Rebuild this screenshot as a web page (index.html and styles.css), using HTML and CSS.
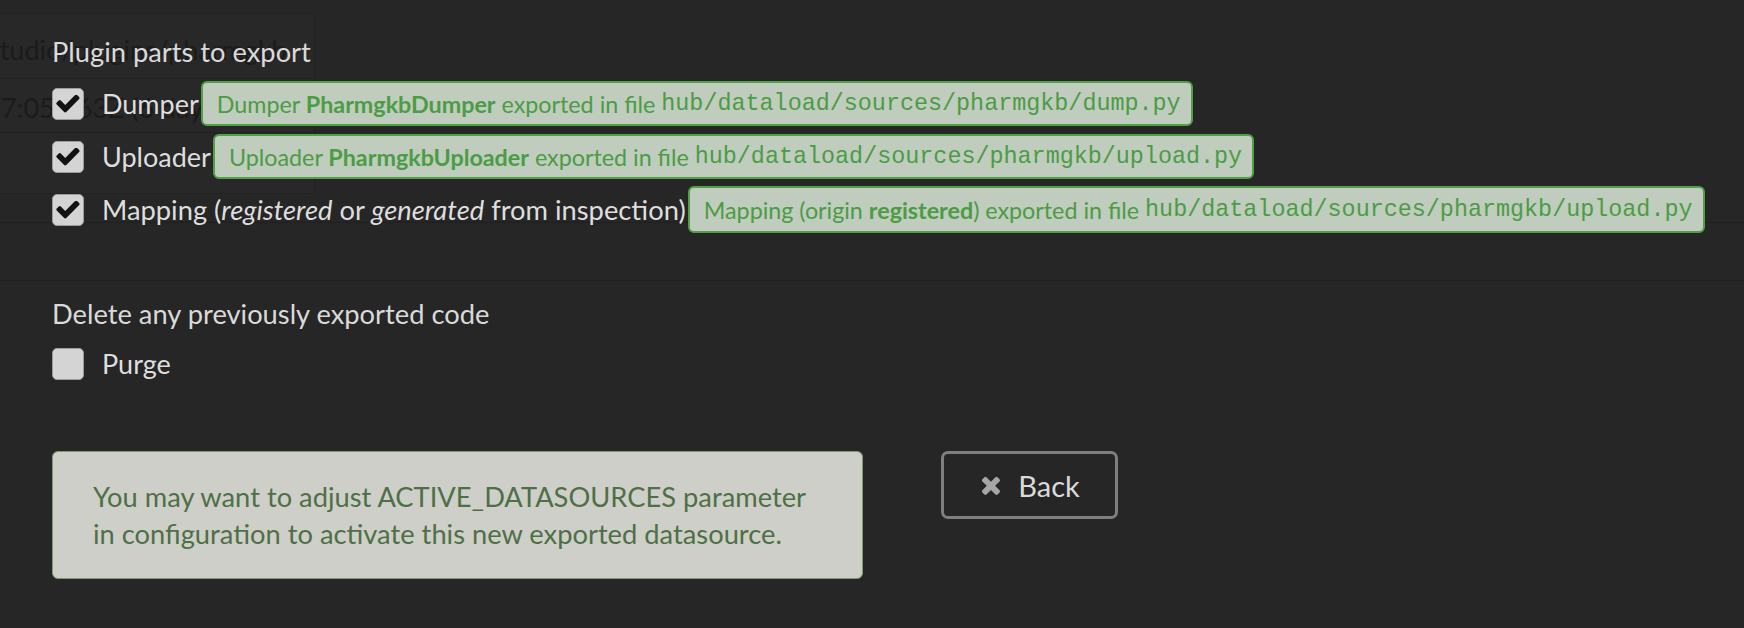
FILE: index.html
```html
<!DOCTYPE html>
<html lang="en">
<head>
<meta charset="utf-8">
<title>Export plugin</title>
<link rel="stylesheet" href="styles.css">
</head>
<body>
<div class="backdrop">
  <div class="bg-table">
    <div class="bg-row bg-row-1"><span class="bg-text bg-path">studio/plugins/pharmgkb</span></div>
    <div class="bg-row bg-row-2"><span class="bg-text bg-date">7:05.263Z (6 days ago)</span></div>
    <div class="bg-row bg-row-3"></div>
  </div>
  <div class="bg-band"></div>
</div>

<div class="modal">
  <section class="group">
    <div class="group-title">Plugin parts to export</div>
    <div class="check-list">
      <div class="check-row">
        <span class="box checked"><svg viewBox="100 400 1600 1120" class="tick"><path d="M1671 566q0 40-28 68l-724 724-136 136q-28 28-68 28t-68-28l-136-136-362-362q-28-28-28-68t28-68l136-136q28-28 68-28t68 28l294 295 656-657q28-28 68-28t68 28l136 136q28 28 28 68z"/></svg></span>
        <span class="label">Dumper</span>
        <span class="badge">Dumper&nbsp;<b>PharmgkbDumper</b>&nbsp;exported in file&nbsp;<code>hub/dataload/sources/pharmgkb/dump.py</code></span>
      </div>
      <div class="check-row">
        <span class="box checked"><svg viewBox="100 400 1600 1120" class="tick"><path d="M1671 566q0 40-28 68l-724 724-136 136q-28 28-68 28t-68-28l-136-136-362-362q-28-28-28-68t28-68l136-136q28-28 68-28t68 28l294 295 656-657q28-28 68-28t68 28l136 136q28 28 28 68z"/></svg></span>
        <span class="label">Uploader</span>
        <span class="badge">Uploader&nbsp;<b>PharmgkbUploader</b>&nbsp;exported in file&nbsp;<code>hub/dataload/sources/pharmgkb/upload.py</code></span>
      </div>
      <div class="check-row">
        <span class="box checked"><svg viewBox="100 400 1600 1120" class="tick"><path d="M1671 566q0 40-28 68l-724 724-136 136q-28 28-68 28t-68-28l-136-136-362-362q-28-28-28-68t28-68l136-136q28-28 68-28t68 28l294 295 656-657q28-28 68-28t68 28l136 136q28 28 28 68z"/></svg></span>
        <span class="label label-long">Mapping (<i>registered</i> or <i>generated</i> from inspection)</span>
        <span class="badge badge-tall">Mapping (origin&nbsp;<b>registered</b>) exported in file&nbsp;<code>hub/dataload/sources/pharmgkb/upload.py</code></span>
      </div>
    </div>
  </section>

  <section class="group group-purge">
    <div class="group-title">Delete any previously exported code</div>
    <div class="check-list">
      <div class="check-row">
        <span class="box"></span>
        <span class="label">Purge</span>
      </div>
    </div>
  </section>

  <div class="actions">
    <div class="notice">You may want to adjust ACTIVE_DATASOURCES parameter<br>in configuration to activate this new exported datasource.</div>
    <button class="back-btn" type="button"><svg class="x-icon" viewBox="110 246 1380 1380"><path d="M1490 1322q0 40-28 68l-136 136q-28 28-68 28t-68-28l-294-294-294 294q-28 28-68 28t-68-28l-136-136q-28-28-28-68t28-68l294-294-294-294q-28-28-28-68t28-68l136-136q28-28 68-28t68 28l294 294 294-294q28-28 68-28t68 28l136 136q28 28 28 68t-28 68l-294 294 294 294q28 28 28 68z"/></svg><span>Back</span></button>
  </div>
</div>
</body>
</html>
```

FILE: styles.css
```css
html, body {
  margin: 0;
  padding: 0;
}

body {
  background: #262626;
  font-family: Lato, "Open Sans", sans-serif;
  color: #dcdcdc;
  width: 1744px;
  height: 628px;
  overflow: hidden;
  position: relative;
}

/* dimmed page behind the modal */
.backdrop {
  position: absolute;
  inset: 0;
  z-index: 0;
}

.bg-table {
  position: absolute;
  left: -40px;
  top: 13px;
  width: 353px;
  border: 1px solid #222222;
  border-radius: 0 0 5px 0;
  background: #282828;
}

.bg-row {
  border-top: 1px solid #222222;
  display: flex;
  align-items: center;
}

.bg-row:first-child {
  border-top: none;
}

.bg-row-1 { height: 64px; }
.bg-row-2 { height: 53px; }
.bg-row-3 { height: 60px; }

.bg-text {
  font-size: 27px;
  color: #1b1b1b;
  white-space: nowrap;
}

.bg-path {
  padding-left: 27px;
  margin-top: 6px;
}

.bg-date {
  padding-left: 40px;
  margin-top: 4px;
}

.bg-band {
  position: absolute;
  left: 0;
  right: 0;
  top: 222px;
  height: 57px;
  border-top: 1px solid #1f1f1f;
  border-bottom: 1px solid #1f1f1f;
}

/* modal content */
.modal {
  position: relative;
  z-index: 1;
  padding: 37px 0 0 52px;
}

.group-title {
  font-size: 27.3px;
  line-height: 30px;
  color: #dadada;
}

.check-list {
  margin-top: 10px;
}

.check-row {
  display: flex;
  align-items: center;
  height: 53px;
}

.box {
  flex: none;
  width: 32px;
  height: 32px;
  box-sizing: border-box;
  border: 1px solid #9d9d9d;
  border-radius: 5px;
  background: #d4d4d4;
  margin-right: 18px;
  display: flex;
  align-items: center;
  justify-content: center;
}

.tick {
  width: 24px;
  height: 18px;
  fill: #121212;
}

.label {
  font-size: 27px;
  color: #dedede;
  white-space: nowrap;
}

.label-long {
  font-size: 27.3px;
}

.badge {
  margin-left: 2px;
  height: 45px;
  box-sizing: border-box;
  border: 2px solid #50a046;
  border-radius: 6px;
  background: #c0ccbe;
  color: #4b9c44;
  padding: 0 10px 0 14px;
  font-size: 23.3px;
  display: flex;
  align-items: center;
  white-space: nowrap;
}

.badge-tall {
  height: 47px;
}

.badge b {
  font-weight: 700;
}

.badge code {
  font-family: "Liberation Mono", "DejaVu Sans Mono", monospace;
  font-size: 23.4px;
}

.group-purge {
  margin-top: 63px;
}

.group-purge .check-list {
  margin-top: 8px;
}

.actions {
  margin-top: 61px;
  display: flex;
  align-items: flex-start;
  gap: 78px;
}

.notice {
  width: 811px;
  box-sizing: border-box;
  border: 1px solid #7e9a72;
  border-radius: 6px;
  background: #cecfc8;
  color: #4f6f47;
  padding: 26px 40px;
  font-size: 27.3px;
  line-height: 37px;
}

.back-btn {
  width: 177px;
  height: 68px;
  box-sizing: border-box;
  border: 3px solid #7f7f7f;
  border-radius: 7px;
  background: transparent;
  display: flex;
  align-items: center;
  justify-content: center;
  gap: 18px;
  font-family: Lato, "Open Sans", sans-serif;
  font-size: 29px;
  color: #dadada;
  padding: 0;
  cursor: pointer;
}

.x-icon {
  width: 21px;
  height: 21px;
  fill: #a6a6a6;
}
```
